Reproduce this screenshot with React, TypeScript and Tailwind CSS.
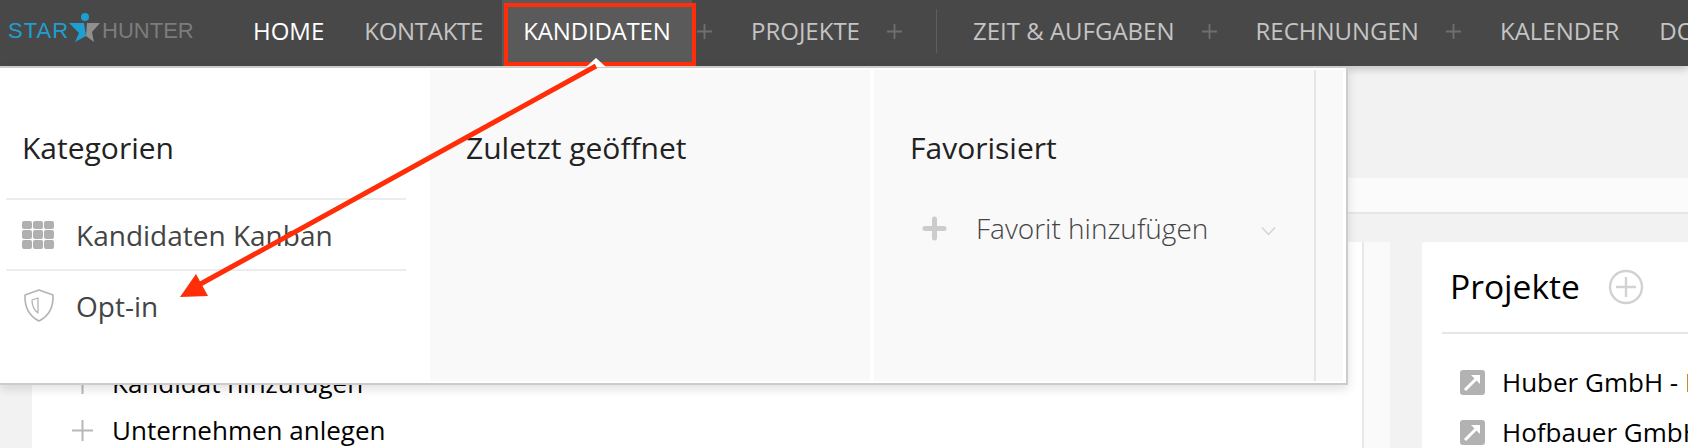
import React from "react";

const navText = "text-[24px] leading-none whitespace-nowrap text-[#c4c4c4]";

function NavPlus({ className }: { className: string }) {
  return (
    <svg className={`shrink-0 ${className}`} width="15" height="15" viewBox="0 0 15 15" fill="none" stroke="#6f6f6f" strokeWidth="1.8">
      <path d="M7.5 0v15M0 7.5h15" />
    </svg>
  );
}

function Logo() {
  return (
    <div className="flex items-center ml-2 w-[186px] shrink-0 font-['Liberation_Sans',Arial,sans-serif] text-[22px] leading-none">
      <span className="text-[#1f9fd0] tracking-[1px]">STAR</span>
      <svg className="mt-[-8px] shrink-0" width="31" height="30" viewBox="0 0 31 30">
        <circle cx="16" cy="5" r="4" fill="#1f9fd0" />
        <path d="M0 11 H15 L17 24 L6 30 L10 21 Z" fill="#1f9fd0" />
        <path d="M18 11 L31 11 L23 20 L25 30 L17 24 Z" fill="#8f8f8f" />
      </svg>
      <span className="text-[#7c7c7c] ml-[2px]">HUNTER</span>
    </div>
  );
}

function NavBar() {
  return (
    <header className="relative h-[66px] pb-[4px] bg-[#484848] flex items-center overflow-hidden shadow-[0_3px_8px_rgba(0,0,0,0.2)]">
      <Logo />
      <span className="ml-[59px] text-[24px] leading-none text-white shrink-0">HOME</span>
      <span className={`ml-[40px] tracking-[-0.3px] ${navText}`}>KONTAKTE</span>
      <div className="ml-[19px] self-stretch mb-[-4px] pb-[4px] w-[190px] shrink-0 bg-[#5a5a5a] flex items-center justify-center text-[24px] tracking-[-0.2px] leading-none text-white">KANDIDATEN</div>
      <NavPlus className="ml-[5px]" />
      <span className={`ml-[39px] ${navText}`}>PROJEKTE</span>
      <NavPlus className="ml-[27px]" />
      <div className="ml-[34px] w-[1px] h-[44px] bg-[#5e5e5e] shrink-0" />
      <span className={`ml-[36px] ${navText}`}>ZEIT &amp; AUFGABEN</span>
      <NavPlus className="ml-[28px]" />
      <span className={`ml-[38px] ${navText}`}>RECHNUNGEN</span>
      <NavPlus className="ml-[27px]" />
      <span className={`ml-[39px] ${navText}`}>KALENDER</span>
      <span className={`ml-[40px] ${navText}`}>DOKUMENTE</span>
    </header>
  );
}

function GridIcon() {
  const cells = [0, 1, 2, 3, 4, 5, 6, 7, 8];
  return (
    <div className="grid grid-cols-3 gap-x-[1px] gap-y-[1.5px] w-[32px] h-[28px] shrink-0">
      {cells.map((c) => (
        <div key={c} className="bg-[#b0b0b0] rounded-[2px]" />
      ))}
    </div>
  );
}

function ShieldIcon() {
  return (
    <svg className="shrink-0" width="32" height="33" viewBox="0 0 32 33" fill="none" stroke="#b4b4b4" strokeWidth="1.6" strokeLinejoin="round">
      <path d="M16 1 L30 6 C30.5 18 26 27 16 32 C6 27 1.5 18 2 6 Z" />
      <path d="M15 9 L9 11 C9 16 11 21 15 24 Z" strokeWidth="1.3" />
    </svg>
  );
}

function Dropdown() {
  return (
    <div className="absolute left-0 top-[66px] w-[1348px] h-[319px] flex py-[2px] pr-[3px] bg-white border-t-2 border-b-2 border-r-2 border-[#cccccc] shadow-[0_4px_10px_rgba(0,0,0,0.12)] font-['Open_Sans',sans-serif]">
      <section className="w-[430px] shrink-0 pl-[6px] pt-[60px]">
        <h3 className="pl-[16px] text-[30px] leading-[36px] text-[#222222] h-[68px]">Kategorien</h3>
        <div className="w-[400px] border-t-2 border-[#ececec] h-[71px] flex items-center pl-[16px] gap-[22px]">
          <GridIcon />
          <span className="text-[28px] text-[#444444]">Kandidaten Kanban</span>
        </div>
        <div className="w-[400px] border-t-2 border-[#ececec] h-[71px] flex items-center pl-[17px] gap-[21px]">
          <ShieldIcon />
          <span className="text-[28px] text-[#444444]">Opt-in</span>
        </div>
      </section>
      <section className="w-[440px] shrink-0 bg-[#f9f9f9] pt-[60px] pl-[36px]">
        <h3 className="text-[30px] leading-[36px] text-[#222222]">Zuletzt geöffnet</h3>
      </section>
      <div className="w-[4px] shrink-0" />
      <section className="w-[442px] shrink-0 bg-[#f9f9f9] pt-[60px] pl-[36px] border-r-2 border-[#e6e6e6]">
        <h3 className="text-[30px] leading-[36px] text-[#222222]">Favorisiert</h3>
        <div className="flex items-center mt-[41px] ml-[12px]">
          <svg className="shrink-0" width="25" height="25" viewBox="0 0 25 25" fill="none" stroke="#cccccc" strokeWidth="5" strokeLinecap="round">
            <path d="M12.5 3v19M3 12.5h19" />
          </svg>
          <span className="ml-[29px] text-[28px] font-light text-[#444444] whitespace-nowrap">Favorit hinzufügen</span>
          <svg className="ml-[53px] mt-[6px] shrink-0" width="15" height="10" viewBox="0 0 15 10" fill="none" stroke="#d4d4d4" strokeWidth="1.5">
            <path d="M1 1.5 L7.5 8.5 L14 1.5" />
          </svg>
        </div>
      </section>
      <div className="flex-1 bg-[#f9f9f9]" />
    </div>
  );
}

function ProjectIcon() {
  return (
    <div className="w-[25px] h-[25px] rounded-[3px] bg-[#b2b2b2] shrink-0 flex items-center justify-center">
      <svg width="19" height="19" viewBox="0 0 19 19" fill="none">
        <path d="M2 17 L13 6" stroke="#ffffff" strokeWidth="3" />
        <path d="M8 2 H17 V11 Z" fill="#ffffff" />
      </svg>
    </div>
  );
}

function RowPlus() {
  return (
    <svg className="shrink-0" width="21" height="21" viewBox="0 0 21 21" fill="none" stroke="#b8b8b8" strokeWidth="2">
      <path d="M10.5 0v21M0 10.5h21" />
    </svg>
  );
}

function Page() {
  return (
    <main className="pt-[66px] font-['Open_Sans',sans-serif]">
      <div className="h-[112px]" />
      <div className="h-[36px] bg-[#fbfbfb] border-b-2 border-[#e6e6e6]" />
      <div className="pt-[28px] flex">
        <div className="ml-[32px] w-[1358px] h-[206px] shrink-0 bg-white flex">
          <div className="w-[1330px] h-full pt-[118px] pl-[40px] text-[26px] text-black">
            <div className="flex items-center h-[46px] gap-[19px]">
              <RowPlus />
              <span>Kandidat hinzufügen</span>
            </div>
            <div className="flex items-center h-[46px] mt-[1px] gap-[19px]">
              <RowPlus />
              <span>Unternehmen anlegen</span>
            </div>
          </div>
          <div className="flex-1 bg-[#fafafa] border-l-2 border-[#e8e8e8]" />
        </div>
        <div className="ml-[32px] w-[266px] h-[206px] shrink-0 bg-white rounded-tl-[3px] pl-[20px] overflow-hidden">
          <div className="h-[92px] border-b-2 border-[#e6e6e6] flex items-center pl-[8px]">
            <span className="text-[33.6px] text-black leading-none">Projekte</span>
            <svg className="ml-[28px] shrink-0" width="36" height="36" viewBox="0 0 36 36" fill="none" stroke="#d2d2d2" strokeWidth="2.4">
              <circle cx="18" cy="18" r="16" />
              <path d="M18 8v20M8 18h20" />
            </svg>
          </div>
          <div className="pt-[23px] pl-[18px] w-[400px] text-[26px] text-black whitespace-nowrap">
            <div className="flex items-center h-[50px] gap-[17px]">
              <ProjectIcon />
              <span>Huber GmbH - Projekt</span>
            </div>
            <div className="flex items-center h-[50px] gap-[17px]">
              <ProjectIcon />
              <span>Hofbauer GmbH</span>
            </div>
          </div>
        </div>
      </div>
    </main>
  );
}

function Annotation() {
  return (
    <svg className="absolute left-0 top-0 pointer-events-none" width="1688" height="448" viewBox="0 0 1688 448">
      <path d="M596 58 L606 67 L586 67 Z" fill="#ffffff" />
      <path d="M596 66 L195 287" stroke="#ff2d08" strokeWidth="5" fill="none" />
      <path d="M180 297 L196 274 L208 296 Z" fill="#ff2d08" />
    </svg>
  );
}

export default function App() {
  return (
    <div className="relative w-[1688px] h-[448px] overflow-hidden bg-[#f2f2f2] font-['Open_Sans',sans-serif]">
      <Page />
      <div className="absolute inset-x-0 top-0">
        <NavBar />
      </div>
      <Dropdown />
      <div className="absolute left-[504px] top-[3px] w-[192px] h-[63px] border-[4px] border-[#ff2d08]" />
      <Annotation />
    </div>
  );
}
